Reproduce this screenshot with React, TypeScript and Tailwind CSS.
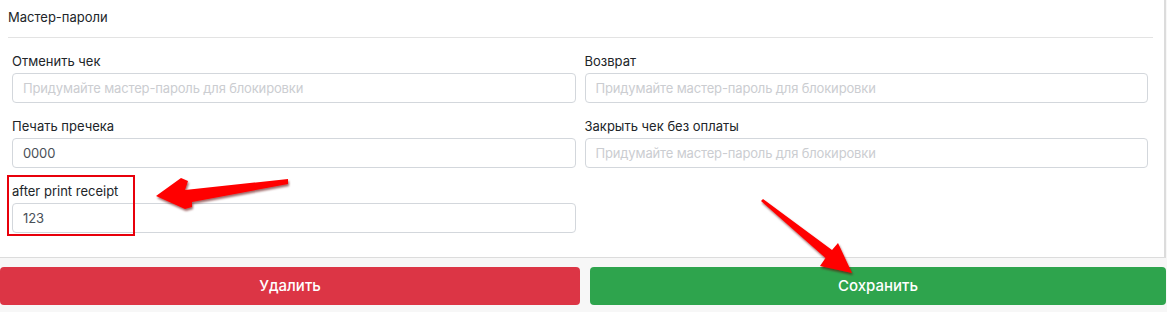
type FieldProps = {
  label: string;
  value?: string;
}

const PLACEHOLDER = "Придумайте мастер-пароль для блокировки";

const Field = ({label, value}: FieldProps) => {
  return (
    <div className="flex flex-col">
      <label className="text-[13px] leading-[18px] text-[#212529] mb-[3px]">{label}</label>
      <input
        readOnly
        value={value ?? ""}
        placeholder={PLACEHOLDER}
        className="h-[30px] w-full rounded-[4px] border border-[#d3d7dc] bg-white px-[10px] text-[13px] tracking-[-0.15px] text-[#495057] placeholder:text-[#cbcdd1] outline-none"
      />
    </div>
  )
}

const Arrows = () => {
  return (
    <svg className="absolute left-0 top-0 pointer-events-none" width="1167" height="312" viewBox="0 0 1167 312">
      <defs>
        <filter id="shadow" x="-20%" y="-20%" width="140%" height="140%">
          <feDropShadow dx="1" dy="2" stdDeviation="1" floodColor="#5a0000" floodOpacity="0.6" />
        </filter>
      </defs>
      <path
        d="M156,196 L181,178 L188,181 L185,190 L288,179 L288,184 L192,202 L192,207 L185,209 Z"
        fill="#ff0000"
        filter="url(#shadow)"
      />
      <path
        d="M852,273 L820,266 L825.5,258 L761,201 L763,199 L832,250 L838,243 Z"
        fill="#ff0000"
        filter="url(#shadow)"
      />
    </svg>
  )
}

const App = () => {
  return (
    <div className="relative w-[1167px] h-[312px] overflow-hidden bg-[#f7f7f7] font-['Inter',sans-serif]">
      <div className="w-[1166px] h-[258px] bg-white border-r-2 border-b border-[#dcdcdc] pl-2 pr-[11px]">
        <div className="h-[38px] pt-[9px] border-b border-[#e3e3e3] text-[13px] leading-[17px] text-[#212529]">
          Мастер-пароли
        </div>
        <div className="grid grid-cols-2 gap-x-[9px] gap-y-[14px] pl-1 pr-[5px] pt-[14px]">
          <Field label="Отменить чек" />
          <Field label="Возврат" />
          <Field label="Печать пречека" value="0000" />
          <Field label="Закрыть чек без оплаты" />
          <Field label="after print receipt" value="123" />
        </div>
      </div>
      <div className="flex gap-[10px] pt-[9px] w-[1166px]">
        <button className="w-[580px] h-[38px] rounded-[4px] bg-[#dc3545] text-white text-[15px] font-medium">
          Удалить
        </button>
        <button className="flex-1 h-[38px] rounded-[4px] bg-[#2ea44d] text-white text-[15px] font-medium">
          Сохранить
        </button>
      </div>
      {/* annotation box */}
      <div className="absolute left-[7px] top-[175px] w-[128px] h-[61px] border-2 border-[#e8000b]" />
      <Arrows />
    </div>
  )
}

export default App
